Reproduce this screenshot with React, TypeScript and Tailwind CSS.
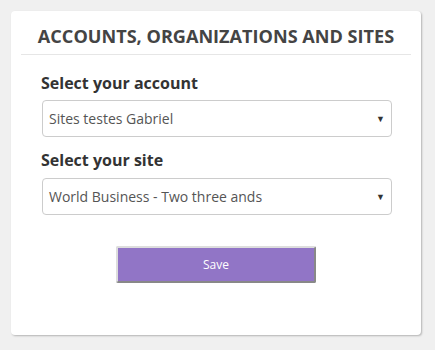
import React from "react";

function Select({ value }: { value: string }) {
  return (
    <div className="relative h-[37px] w-[350px] rounded-[4px] border border-[#cccccc] bg-white">
      <div className="flex h-full items-center pl-[6px] text-[14px] text-[#555555]">{value}</div>
      <span className="absolute right-[6px] top-[11px] text-[9px] text-[#333]">▼</span>
    </div>
  );
}

export default function App() {
  return (
    <div
      className="h-[350px] w-[435px] bg-[#f0f0f0] pl-[11px] pt-[11px]"
      style={{ fontFamily: '"Open Sans", sans-serif' }}
    >
      <div className="h-[324px] w-[410px] rounded-[4px] bg-white shadow-[1px_1px_2px_rgba(0,0,0,0.25)]">
        <div className="mx-[10px] flex h-[44px] items-end justify-center border-b border-[#e6e6e6] pb-[9px]">
          <h1 className="text-[18.1px] font-bold leading-none text-[#444444]">ACCOUNTS, ORGANIZATIONS AND SITES</h1>
        </div>
        <div className="px-[30px] pt-[17px]">
          <div className="mb-[6px] text-[16px] font-bold leading-[22px] text-[#333333]">Select your account</div>
          <div className="pl-[1px]">
            <Select value="Sites testes Gabriel" />
          </div>
          <div className="mb-[7px] mt-[12px] text-[16px] font-bold leading-[22px] text-[#333333]">Select your site</div>
          <div className="pl-[1px]">
            <Select value="World Business - Two three ands" />
          </div>
          <div className="mt-[31px] flex justify-center">
            <button className="h-[37px] w-[200px] rounded-[2px] border-2 border-[#dddddd] border-b-[#888888] border-r-[#888888] bg-[#9175c6] text-[12px] text-white">
              Save
            </button>
          </div>
        </div>
      </div>
    </div>
  );
}
